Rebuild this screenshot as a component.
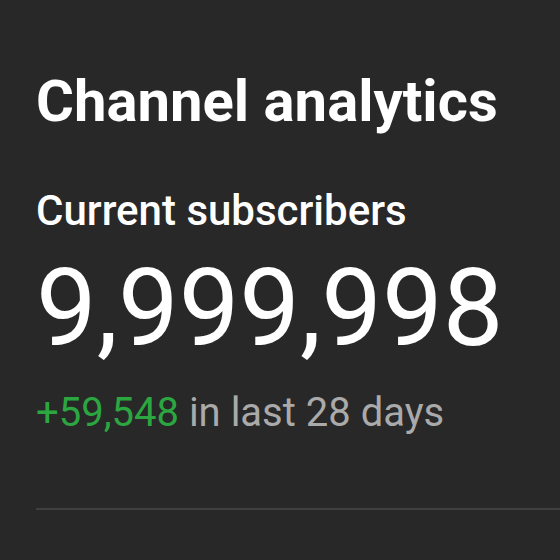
export default function App() {
  return (
    <div className="w-[560px] h-[560px] bg-[#282828] overflow-hidden font-['Roboto',sans-serif]">
      <div className="pl-[36px] pt-[72px]">
        <h1 className="text-[58px] font-bold leading-[58px] text-white">Channel analytics</h1>
        <p className="mt-[60px] text-[42px] font-medium leading-[42px] text-white">Current subscribers</p>
        <p className="mt-[22px] text-[108px] leading-[108px] text-white">9,999,998</p>
        <p className="mt-[31px] text-[40px] leading-[40px] text-[#aaaaaa]">
          <span className="text-[#2ba640]">+59,548</span> in last 28 days
        </p>
      </div>
      <div className="ml-[36px] mt-[75px] h-[2px] bg-[#404040]" />
    </div>
  );
}
